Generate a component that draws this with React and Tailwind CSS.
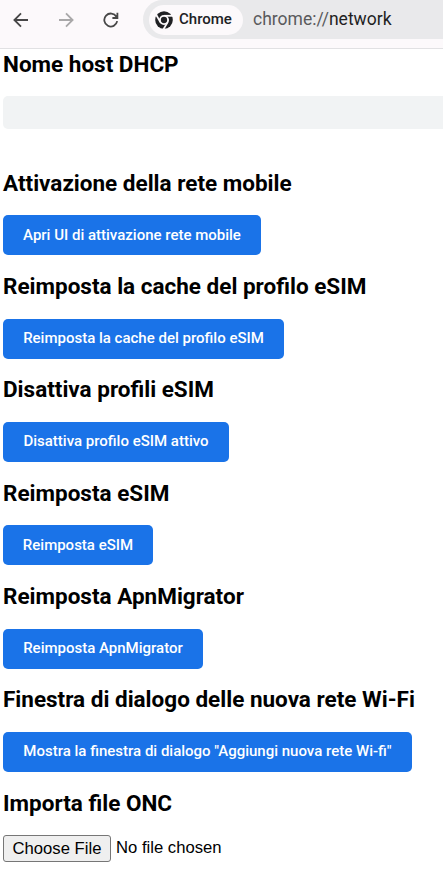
import { clsx } from 'clsx';

const sections = [
  { title: 'Attivazione della rete mobile', action: 'Apri UI di attivazione rete mobile', width: 'w-[258px]' },
  { title: 'Reimposta la cache del profilo eSIM', action: 'Reimposta la cache del profilo eSIM', width: 'w-[281px]' },
  { title: 'Disattiva profili eSIM', action: 'Disattiva profilo eSIM attivo', width: 'w-[226px]' },
  { title: 'Reimposta eSIM', action: 'Reimposta eSIM', width: 'w-[150px]' },
  { title: 'Reimposta ApnMigrator', action: 'Reimposta ApnMigrator', width: 'w-[200px]' },
  {
    title: 'Finestra di dialogo delle nuova rete Wi-Fi',
    action: 'Mostra la finestra di dialogo "Aggiungi nuova rete Wi-fi"',
    width: 'w-[409px]',
  },
];

function ArrowIcon({ className }) {
  return (
    <svg viewBox="0 0 16 16" className={clsx('h-4 w-4 shrink-0', className)} fill="none" stroke="currentColor" strokeWidth="1.8">
      <path d="M15 8H1.8M8 1.4 1.4 8 8 14.6" />
    </svg>
  );
}

function ReloadIcon() {
  return (
    <svg viewBox="0 0 16 16" className="h-4 w-4 shrink-0 text-[#474747]" fill="none" stroke="currentColor" strokeWidth="1.8">
      <path d="M14.2 9.2A6.5 6.5 0 1 1 13.4 4.7M9.4 6h5V.8" />
    </svg>
  );
}

function ChromeIcon() {
  return (
    <svg viewBox="0 0 18 18" className="h-[18px] w-[18px] shrink-0">
      <circle cx="9" cy="9" r="8.8" fill="#202124" />
      <g stroke="#fcf9fb" strokeWidth="1.8">
        <path d="M9 4.8H18" />
        <path d="M9 4.8H18" transform="rotate(120 9 9)" />
        <path d="M9 4.8H18" transform="rotate(240 9 9)" />
      </g>
      <circle cx="9" cy="9" r="4.1" fill="#202124" stroke="#fcf9fb" strokeWidth="1.9" />
    </svg>
  );
}

function Toolbar() {
  return (
    <header className="flex h-[49px] items-start overflow-hidden border-b border-[#e1e1e3] bg-[#fcf9fb] pl-[13px]">
      <div className="flex h-[39px] items-center gap-[29px]">
        <ArrowIcon className="text-[#474747]" />
        <ArrowIcon className="rotate-180 text-[#a9a8a9]" />
        <ReloadIcon />
      </div>
      <div className="ml-[24px] flex h-[39px] w-[340px] shrink-0 items-center rounded-l-full bg-[#e9e9eb] pl-[6px]">
        <div className="flex h-[30px] w-[94px] items-center gap-[6px] rounded-full bg-[#fcf9fb] pl-[6px]">
          <ChromeIcon />
          <span className="text-[15px] font-medium text-[#202124]">Chrome</span>
        </div>
        <span className="ml-[10px] text-[17.5px] text-[#1f1f1f]">
          <span className="text-[#5a5a5c]">chrome://</span>network
        </span>
      </div>
    </header>
  );
}

function Title({ children }) {
  return <h2 className="h-[27px] text-[22.5px] leading-[27px] font-bold whitespace-nowrap text-black">{children}</h2>;
}

export default function App() {
  return (
    <div className="h-[872px] w-[443px] overflow-hidden bg-white font-['Roboto',sans-serif]">
      <Toolbar />
      <main className="pt-[2px] pl-[3px]">
        <Title>Nome host DHCP</Title>
        <div className="mt-[18px] mb-[40.7px] h-[33px] rounded-l-[5px] bg-[#f1f3f4]" />

        {sections.map(({ title, action, width }) => (
          <section key={title} className="mb-[17.73px]">
            <Title>{title}</Title>
            <button
              className={clsx(
                'mt-[18.62px] flex h-10 items-center justify-center rounded-[5px] bg-[#1a73e8] pb-[0.9px] text-[15px] font-medium whitespace-nowrap text-white',
                width
              )}
            >
              {action}
            </button>
          </section>
        ))}

        <Title>Importa file ONC</Title>
        <div className="mt-[18.2px] flex items-start gap-[5px] font-['Liberation_Sans',Arial,sans-serif] text-[16.67px] text-black">
          <button className="h-[27px] w-[108px] rounded-[3px] border border-[#767676] bg-[#efefef] pt-[2px] leading-none">
            Choose File
          </button>
          <span className="leading-[25px]">No file chosen</span>
        </div>
      </main>
    </div>
  );
}
